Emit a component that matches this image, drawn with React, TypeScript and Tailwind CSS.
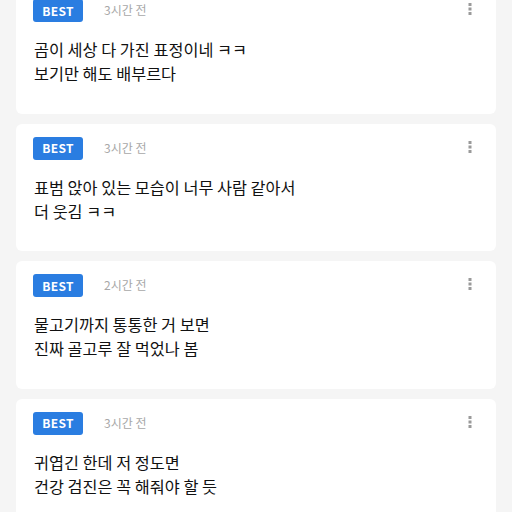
import React from 'react';

interface Comment {
  time: string;
  lines: string[];
}

const comments: Comment[] = [
  { time: '3시간 전', lines: ['곰이 세상 다 가진 표정이네 ㅋㅋ', '보기만 해도 배부르다'] },
  { time: '3시간 전', lines: ['표범 앉아 있는 모습이 너무 사람 같아서', '더 웃김 ㅋㅋ'] },
  { time: '2시간 전', lines: ['물고기까지 통통한 거 보면', '진짜 골고루 잘 먹었나 봄'] },
  { time: '3시간 전', lines: ['귀엽긴 한데 저 정도면', '건강 검진은 꼭 해줘야 할 듯'] },
];

function MoreIcon() {
  return (
    <svg width="4" height="12" viewBox="0 0 4 12" className="text-[#9a9a9a]">
      <rect x="0.5" y="0" width="3" height="3" fill="currentColor" />
      <rect x="0.5" y="4.5" width="3" height="3" fill="currentColor" />
      <rect x="0.5" y="9" width="3" height="3" fill="currentColor" />
    </svg>
  );
}

function CommentCard({ comment }: { comment: Comment }) {
  return (
    <div className="h-[127.5px] shrink-0 rounded-md bg-white pl-[17px] pr-[23px] pt-[13px]">
      <div className="flex items-start">
        <span className="flex h-[23px] w-[50px] items-center justify-center rounded-[3px] bg-[#2a7de1] text-[12px] font-bold tracking-[0.3px] text-white">
          BEST
        </span>
        <span className="ml-[21px] mt-[2px] text-[12px] leading-[18px] text-[#a8a8a8]">
          {comment.time}
        </span>
        <span className="ml-auto mt-[4px] pr-[1px]">
          <MoreIcon />
        </span>
      </div>
      <div className="mt-[15px] pl-[1px] text-[16.3px] leading-[24px] text-[#111]">
        {comment.lines.map((line, i) => (
          <p key={i}>{line}</p>
        ))}
      </div>
    </div>
  );
}

export default function App() {
  return (
    <div
      className="h-[512px] w-[512px] overflow-hidden bg-[#f5f5f5]"
      style={{ fontFamily: '"Noto Sans CJK KR", "Noto Sans", sans-serif' }}
    >
      <div className="-mt-[14px] flex flex-col gap-[10px] px-4">
        {comments.map((c, i) => (
          <CommentCard key={i} comment={c} />
        ))}
      </div>
    </div>
  );
}
